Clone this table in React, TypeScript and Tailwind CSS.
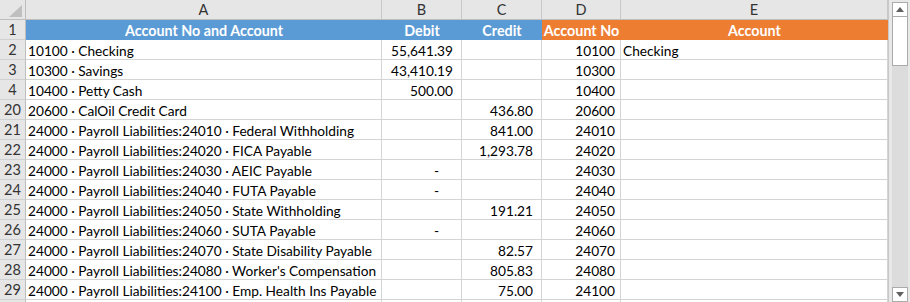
import React from "react";

type Row = { n: number; a: string; b?: string; c?: string; d: string; e?: string };

const P = "24000 · Payroll Liabilities:";
const rows: Row[] = [
  { n: 2, a: "10100 · Checking", b: "55,641.39", d: "10100", e: "Checking" },
  { n: 3, a: "10300 · Savings", b: "43,410.19", d: "10300" },
  { n: 4, a: "10400 · Petty Cash", b: "500.00", d: "10400" },
  { n: 20, a: "20600 · CalOil Credit Card", c: "436.80", d: "20600" },
  { n: 21, a: P + "24010 · Federal Withholding", c: "841.00", d: "24010" },
  { n: 22, a: P + "24020 · FICA Payable", c: "1,293.78", d: "24020" },
  { n: 23, a: P + "24030 · AEIC Payable", b: "-", d: "24030" },
  { n: 24, a: P + "24040 · FUTA Payable", b: "-", d: "24040" },
  { n: 25, a: P + "24050 · State Withholding", c: "191.21", d: "24050" },
  { n: 26, a: P + "24060 · SUTA Payable", b: "-", d: "24060" },
  { n: 27, a: P + "24070 · State Disability Payable", c: "82.57", d: "24070" },
  { n: 28, a: P + "24080 · Worker's Compensation", c: "805.83", d: "24080" },
  { n: 29, a: P + "24100 · Emp. Health Ins Payable", c: "75.00", d: "24100" },
];

const font = { fontFamily: "Lato, 'Liberation Sans', sans-serif" };

function RowNum({ n, last }: { n: number | string; last?: boolean }) {
  return (
    <div className={`h-5 bg-[#e6e6e6] border-r border-r-[#bdbdbd] ${last ? "" : "border-b border-b-[#d0d0d0]"} flex items-center justify-center text-[14.5px] text-[#333] leading-none pt-[2px]`}>
      {n}
    </div>
  );
}

const cell = "h-5 border-r border-b border-[#d4d4d4] flex items-center text-[13.7px] text-black leading-none whitespace-nowrap overflow-visible pt-[2px]";
const hdr = "h-5 flex items-center justify-center text-white font-bold text-[14.3px] leading-none whitespace-nowrap pt-[2px]";

export default function App() {
  return (
    <div className="w-[910px] h-[302px] overflow-hidden bg-white flex" style={font}>
      <div className="w-[888px] grid grid-cols-[26px_356px_80px_80px_79px_267px] content-start">
        <div className="h-5 bg-[#e6e6e6] border-r border-b border-[#bdbdbd] relative">
          <svg className="absolute left-[9px] top-[5px]" width="14" height="12" viewBox="0 0 14 12">
            <polygon points="13,0 13,12 0,12" fill="#bfbfbf" />
          </svg>
        </div>
        {["A", "B", "C", "D", "E"].map((l) => (
          <div key={l} className="h-5 bg-[#e6e6e6] border-r border-b border-r-[#c8c8c8] border-b-[#bdbdbd] flex items-center justify-center text-[14.5px] text-[#333] leading-none pt-[2px]">
            {l}
          </div>
        ))}

        <RowNum n={1} />
        <div className={`${hdr} bg-[#5b9bd5]`}>Account No and Account</div>
        <div className={`${hdr} bg-[#5b9bd5]`}>Debit</div>
        <div className={`${hdr} bg-[#5b9bd5]`}>Credit</div>
        <div className={`${hdr} bg-[#ed7d31]`}>Account No</div>
        <div className={`${hdr} bg-[#ed7d31]`}>Account</div>

        {rows.map((r) => (
          <React.Fragment key={r.n}>
            <RowNum n={r.n} />
            <div className={`${cell} pl-[2px]`}>{r.a}</div>
            <div className={`${cell} justify-end ${r.b === "-" ? "pr-[22px]" : "pr-[8px]"}`}>{r.b ?? ""}</div>
            <div className={`${cell} justify-end pr-[8px]`}>{r.c ?? ""}</div>
            <div className={`${cell} justify-end pr-[5px]`}>{r.d}</div>
            <div className={`${cell} pl-[2px]`}>{r.e ?? ""}</div>
          </React.Fragment>
        ))}
        <RowNum n="" last />
        <div className="h-5 border-r border-[#d4d4d4]" />
        <div className="h-5 border-r border-[#d4d4d4]" />
        <div className="h-5 border-r border-[#d4d4d4]" />
        <div className="h-5 border-r border-[#d4d4d4]" />
        <div className="h-5 border-r border-[#d4d4d4]" />
      </div>

      <div className="w-[22px] h-[302px] bg-[#e8e8e8] border-l border-[#c8c8c8] flex flex-col items-center pt-[2px] pl-[2px] pr-[1px]">
        <div className="w-[16px] flex-1 bg-[#dcdcdc] flex flex-col">
          <div className="h-[15px] bg-white border border-[#ababab] flex items-center justify-center">
            <svg width="8" height="5" viewBox="0 0 8 5"><polygon points="0,5 8,5 4,0" fill="#606060" /></svg>
          </div>
          <div className="h-[49px] bg-white border border-t-0 border-[#ababab]" />
          <div className="flex-1" />
          <div className="h-[15px] bg-white border border-[#ababab] flex items-center justify-center">
            <svg width="8" height="5" viewBox="0 0 8 5"><polygon points="0,0 8,0 4,5" fill="#606060" /></svg>
          </div>
        </div>
      </div>
    </div>
  );
}
